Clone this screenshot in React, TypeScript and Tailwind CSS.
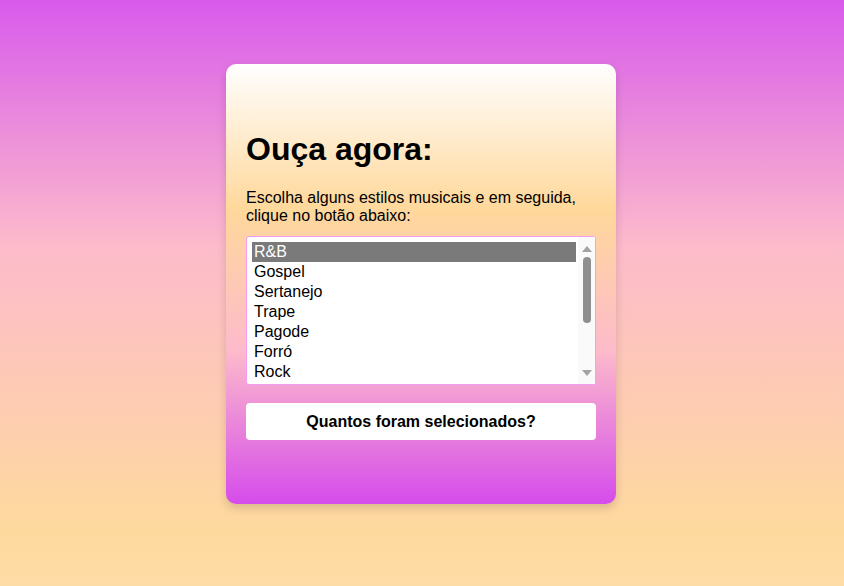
import React from 'react'

const estilos = ['R&B', 'Gospel', 'Sertanejo', 'Trape', 'Pagode', 'Forró', 'Rock']

const ListaEstilos = (): React.ReactElement => {
    return (
        <div className="flex h-[149px] w-full rounded-[3px] border border-[#f29cf4] bg-white">
            <ul className="flex-1 pl-[5px] pt-[5px]">
                {estilos.map((estilo, i) => (
                    <li
                        key={estilo}
                        className={
                            i === 0
                                ? 'h-5 bg-[#7a7a7a] pl-[2px] text-[16px] leading-5 text-white'
                                : 'h-5 pl-[2px] text-[16px] leading-5 text-black'
                        }
                    >
                        {estilo}
                    </li>
                ))}
            </ul>
            <div className="flex w-[17px] flex-col items-center bg-[#fafafa] pt-[9px] pb-[8px] ml-[2px]">
                <svg width="10" height="6" viewBox="0 0 10 6">
                    <path d="M5 0 L10 6 L0 6 Z" fill="#a3a3a3" />
                </svg>
                <div className="mt-[5px] h-[66px] w-[8px] rounded-full bg-[#8f8f8f]" />
                <div className="flex-1" />
                <svg width="10" height="6" viewBox="0 0 10 6">
                    <path d="M0 0 L10 0 L5 6 Z" fill="#a3a3a3" />
                </svg>
            </div>
        </div>
    )
}

export default function App(): React.ReactElement {
    return (
        <div
            className="flex min-h-[586px] w-full justify-center bg-[linear-gradient(to_bottom,#d85aec_0%,#fdbbcb_42%,#fed99e_90%,#fedca5_100%)] pt-16 pr-[2px]"
            style={{ fontFamily: '"Liberation Sans", Arial, sans-serif' }}
        >
            <div className="flex h-[440px] w-[390px] flex-col rounded-[10px] bg-[linear-gradient(to_bottom,#ffffff_0%,#ffd89b_33%,#fdbbcb_65%,#d54ceb_100%)] px-5 pt-[67px] shadow-[0_4px_10px_rgba(0,0,0,0.15)]">
                <h1 className="text-[32px] font-bold leading-[37px] text-black">Ouça agora:</h1>
                <p className="mt-[21px] text-[16px] leading-[18px] text-black">
                    Escolha alguns estilos musicais e em seguida, clique no botão abaixo:
                </p>
                <div className="mt-[11px]">
                    <ListaEstilos />
                </div>
                <button className="mt-[18px] h-[37px] w-full rounded-[4px] bg-white text-[16px] font-bold text-black">
                    Quantos foram selecionados?
                </button>
            </div>
        </div>
    )
}
